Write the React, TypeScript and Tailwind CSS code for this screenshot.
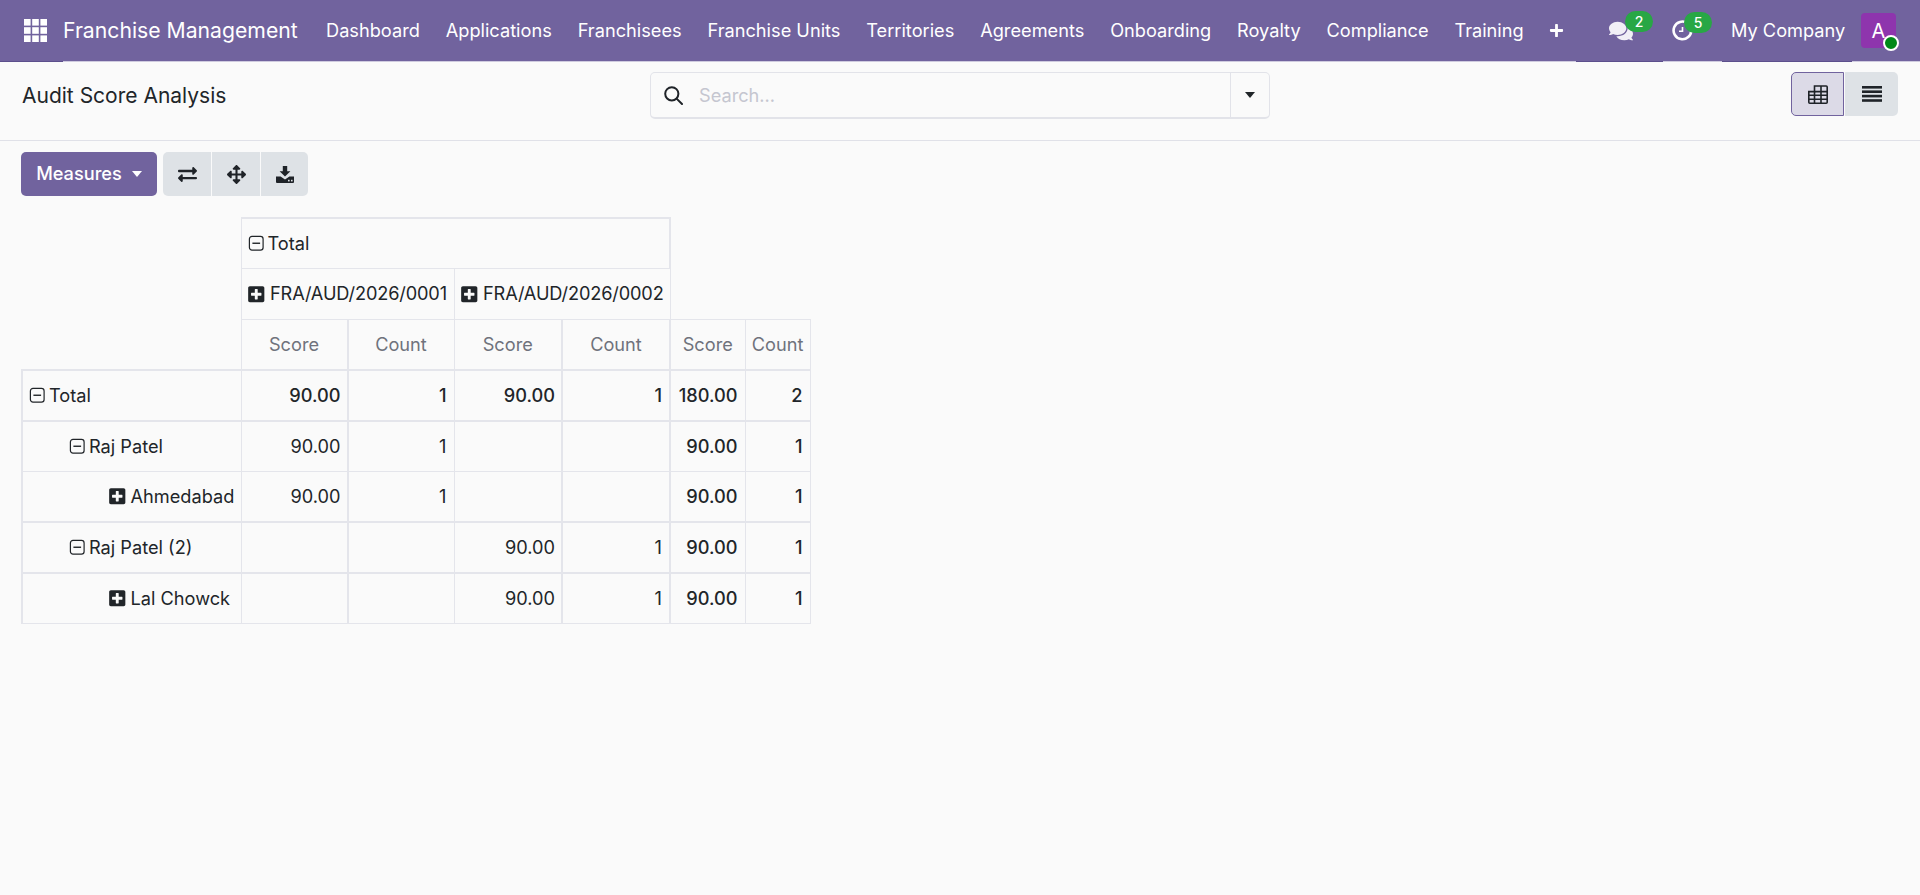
import { FaComments, FaExchangeAlt, FaArrowsAlt, FaPlus, FaPlusSquare } from "react-icons/fa";

const navItems = [
  "Dashboard",
  "Applications",
  "Franchisees",
  "Franchise Units",
  "Territories",
  "Agreements",
  "Onboarding",
  "Royalty",
  "Compliance",
  "Training",
];

type PivotRow = {
  label: string;
  indent: string;
  open: boolean;
  bold?: boolean;
  top: string;
  values: string[];
};

const rows: PivotRow[] = [
  { label: "Total", indent: "pl-[6px]", open: true, bold: true, top: "border-t-2", values: ["90.00", "1", "90.00", "1", "180.00", "2"] },
  { label: "Raj Patel", indent: "pl-[46px]", open: true, top: "border-t-2", values: ["90.00", "1", "", "", "90.00", "1"] },
  { label: "Ahmedabad", indent: "pl-[86px]", open: false, top: "border-t", values: ["90.00", "1", "", "", "90.00", "1"] },
  { label: "Raj Patel (2)", indent: "pl-[46px]", open: true, top: "border-t-2", values: ["", "", "90.00", "1", "90.00", "1"] },
  { label: "Lal Chowck", indent: "pl-[86px]", open: false, top: "border-t-2", values: ["", "", "90.00", "1", "90.00", "1"] },
];

const columnLines = ["border-l", "border-l-2", "border-l", "border-l-2", "border-l-2", "border-l"];
const cellPadding = ["pr-[6px]", "pr-[7px]", "pr-[6px]", "pr-[7px]", "pr-[7px]", "pr-[7px]"];

const AppsIcon = () => (
  <svg width="23" height="23" viewBox="0 0 23 23" fill="currentColor">
    {[0, 8.2, 16.4].map((y) =>
      [0, 8.2, 16.4].map((x) => <rect key={`${x}-${y}`} x={x} y={y} width="6.6" height="6.6" />)
    )}
  </svg>
);

const ClockIcon = () => (
  <svg width="21" height="21" viewBox="0 0 21 21" fill="none" stroke="currentColor" strokeWidth="2.6">
    <path d="M15.5 3.2A8.8 8.8 0 1 0 19.2 10" strokeLinecap="round" />
    <path d="M10.5 7v4.2H7" strokeWidth="1.6" />
  </svg>
);

const SearchIcon = () => (
  <svg width="19" height="19" viewBox="0 0 19 19" fill="none" stroke="#1f2328" strokeWidth="2">
    <circle cx="7.8" cy="7.8" r="6.6" />
    <path d="M12.6 12.6l5.4 5.4" strokeLinecap="round" />
  </svg>
);

const DownloadIcon = () => (
  <svg width="18" height="17" viewBox="0 0 18 17" fill="currentColor">
    <path d="M6.8 0h4.4v5.2h3.2L9 10.6 3.6 5.2h3.2z" />
    <path d="M0 10.5h4.6L9 13.4l4.4-2.9H18V16a1 1 0 0 1-1 1H1a1 1 0 0 1-1-1z" />
    <rect x="12" y="13.8" width="1.6" height="1.6" fill="#dee2e6" />
    <rect x="15" y="13.8" width="1.6" height="1.6" fill="#dee2e6" />
  </svg>
);

const PivotViewIcon = () => (
  <svg width="20" height="19" viewBox="0 0 20 19" fill="none" stroke="#1f2328" strokeWidth="1.6">
    <path d="M6.5 1h11.7a1 1 0 0 1 1 1v15.2a1 1 0 0 1-1 1H1.8a1 1 0 0 1-1-1V6.6h5.7z" />
    <path d="M6.5 6.6h12.7M0.8 10.2h18.4M0.8 14.2h18.4M6.5 6.6v11.6M13 1v17.2" />
  </svg>
);

const ListViewIcon = () => (
  <svg width="20" height="16" viewBox="0 0 20 16" fill="#1f2328">
    <rect width="20" height="2.6" />
    <rect y="4.4" width="20" height="2.6" />
    <rect y="8.8" width="20" height="2.6" />
    <rect y="13.2" width="20" height="2.6" />
  </svg>
);

const MinusBox = () => (
  <svg width="16.5" height="16.5" viewBox="0 0 16.5 16.5" fill="none" stroke="currentColor" strokeWidth="1.2" className="shrink-0 mr-[3.5px]">
    <rect x="1.4" y="1.4" width="13.7" height="13.7" rx="2.6" />
    <path d="M4.4 8.25h7.7" strokeWidth="1.4" />
  </svg>
);

const Toggle = ({ open }: { open: boolean }) =>
  open ? <MinusBox /> : <FaPlusSquare className="text-[18.5px] shrink-0 -ml-[1.5px] mr-[4.5px]" />;

const App = () => {
  return (
    <div className="min-h-[895px] bg-[#fafafa] text-[18.2px] text-[#212529] font-['Inter',sans-serif]">
      {/* Navbar */}
      <header className="h-[62px] flex items-stretch bg-[#71639e] border-b border-b-[#cfcbdf] text-white">
        <div className="w-[63px] flex items-center justify-center border-b border-b-[#5c4f8c] -mb-px pl-[7px]">
          <AppsIcon />
        </div>
        <div className="flex items-center text-[21.2px] pr-[15.4px]">Franchise Management</div>
        {navItems.map((item) => (
          <div key={item} className="flex items-center px-[12.95px] whitespace-nowrap">
            {item}
          </div>
        ))}
        <div className="flex items-center pl-[12px]">
          <FaPlus className="text-[15px]" />
        </div>

        <div className="ml-auto flex items-stretch pr-[24px]">
          <div className="w-[87px] flex items-center pl-[33px] border-b border-b-[#5c4f8c] -mb-px">
            <div className="relative">
              <FaComments className="text-[24px] text-[#f1eff6]" />
              <span className="absolute -top-[8px] left-[16px] w-[28px] h-[21px] rounded-full bg-[#28a745] text-[14px] font-medium flex items-center justify-center">
                2
              </span>
            </div>
          </div>
          <div className="w-[59px] flex items-center pl-[9px]">
            <div className="relative">
              <ClockIcon />
              <span className="absolute -top-[8px] left-[12px] w-[28px] h-[21px] rounded-full bg-[#28a745] text-[14px] font-medium flex items-center justify-center">
                5
              </span>
            </div>
          </div>
          <div className="w-[130px] mr-[9px] flex items-center pl-[9px] border-b border-b-[#5c4f8c] -mb-px whitespace-nowrap">
            My Company
          </div>
          <div className="flex items-center">
            <div className="relative w-[35px] h-[35px] rounded-[4px] bg-[#8e35ad] flex items-center justify-center text-[20px]">
              A
              <span className="absolute -right-[3px] -bottom-[3px] w-[16px] h-[16px] rounded-full bg-[#008818] border-2 border-white" />
            </div>
          </div>
        </div>
      </header>

      {/* Control panel */}
      <div className="h-[79px] flex items-start pt-[10px] pl-[21px] pr-[22px] border-b border-b-[#e0e1e8]">
        <div className="w-[629px] h-[47px] flex items-center pl-px text-[21px] leading-none whitespace-nowrap">
          Audit Score Analysis
        </div>
        <div className="w-[620px] h-[47px] flex items-stretch rounded-[5px] border border-[#e2e3e9] border-b-2">
          <div className="flex-1 flex items-center pl-[13px]">
            <SearchIcon />
            <span className="ml-[16px] pt-px text-[#c5c6d0]">Search...</span>
          </div>
          <div className="w-[39px] flex items-center justify-center border-l border-l-[#e2e3e9]">
            <span className="w-0 h-0 border-x-[5.5px] border-x-transparent border-t-[6px] border-t-[#212529]" />
          </div>
        </div>
        <div className="ml-auto flex gap-px">
          <button className="w-[53px] h-[44px] flex items-center justify-center bg-[#dcdae7] border border-[#71639e] rounded-l-[5px]">
            <PivotViewIcon />
          </button>
          <button className="w-[53px] h-[44px] flex items-center justify-center bg-[#dee2e6] rounded-r-[5px]">
            <ListViewIcon />
          </button>
        </div>
      </div>

      {/* Buttons */}
      <div className="flex items-center gap-[6px] pl-[21px] pt-[11px]">
        <button className="w-[136px] h-[44px] flex items-center justify-center gap-[10px] rounded-[5px] bg-[#71639e] text-white font-medium">
          Measures
          <span className="w-0 h-0 border-x-[5.5px] border-x-transparent border-t-[6px] border-t-white" />
        </button>
        <div className="flex gap-px">
          <button className="w-[48px] h-[44px] flex items-center justify-center bg-[#dee2e6] rounded-l-[5px]">
            <FaExchangeAlt className="text-[19px] text-[#1f2328]" />
          </button>
          <button className="w-[48px] h-[44px] flex items-center justify-center bg-[#dee2e6]">
            <FaArrowsAlt className="text-[19px] text-[#1f2328]" />
          </button>
          <button className="w-[47px] h-[44px] flex items-center justify-center bg-[#dee2e6] rounded-r-[5px] text-[#1f2328]">
            <DownloadIcon />
          </button>
        </div>
      </div>

      {/* Pivot table */}
      <div className="pl-[21px] pt-[21px]">
        <table className="table-fixed w-[788px] border-collapse border-[#e4e5eb]">
          <colgroup>
            <col className="w-[219px]" />
            <col className="w-[106.5px]" />
            <col className="w-[106.5px]" />
            <col className="w-[108px]" />
            <col className="w-[108px]" />
            <col className="w-[75px]" />
            <col className="w-[65px]" />
          </colgroup>
          <thead>
            <tr className="h-[50.7px]">
              <th rowSpan={3} />
              <th colSpan={4} className="border border-t-2 border-r-2 border-[#e4e5eb] pl-[6px] font-normal text-left">
                <span className="flex items-center">
                  <Toggle open />
                  Total
                </span>
              </th>
              <th colSpan={2} rowSpan={2} />
            </tr>
            <tr className="h-[50.7px]">
              {["FRA/AUD/2026/0001", "FRA/AUD/2026/0002"].map((code) => (
                <th key={code} colSpan={2} className="border border-[#e4e5eb] pl-[7px] font-normal text-left whitespace-nowrap">
                  <span className="flex items-center tracking-[-0.15px]">
                    <Toggle open={false} />
                    {code}
                  </span>
                </th>
              ))}
            </tr>
            <tr className="h-[50.7px]">
              {["Score", "Count", "Score", "Count", "Score", "Count"].map((name, i) => (
                <th key={i} className={`border border-[#e4e5eb] ${columnLines[i]} font-normal text-center text-[#6f727c]`}>
                  {name}
                </th>
              ))}
            </tr>
          </thead>
          <tbody>
            {rows.map((row) => (
              <tr key={row.label} className="h-[50.7px]">
                <td className={`border border-l-2 border-[#e4e5eb] ${row.top} ${row.indent}`}>
                  <span className="flex items-center whitespace-nowrap">
                    <Toggle open={row.open} />
                    {row.label}
                  </span>
                </td>
                {row.values.map((value, i) => (
                  <td
                    key={i}
                    className={`border border-[#e4e5eb] ${columnLines[i]} ${row.top} ${cellPadding[i]} text-right ${row.bold || i > 3 ? "font-medium" : ""}`}
                  >
                    {value}
                  </td>
                ))}
              </tr>
            ))}
          </tbody>
        </table>
      </div>
    </div>
  );
};

export default App;
